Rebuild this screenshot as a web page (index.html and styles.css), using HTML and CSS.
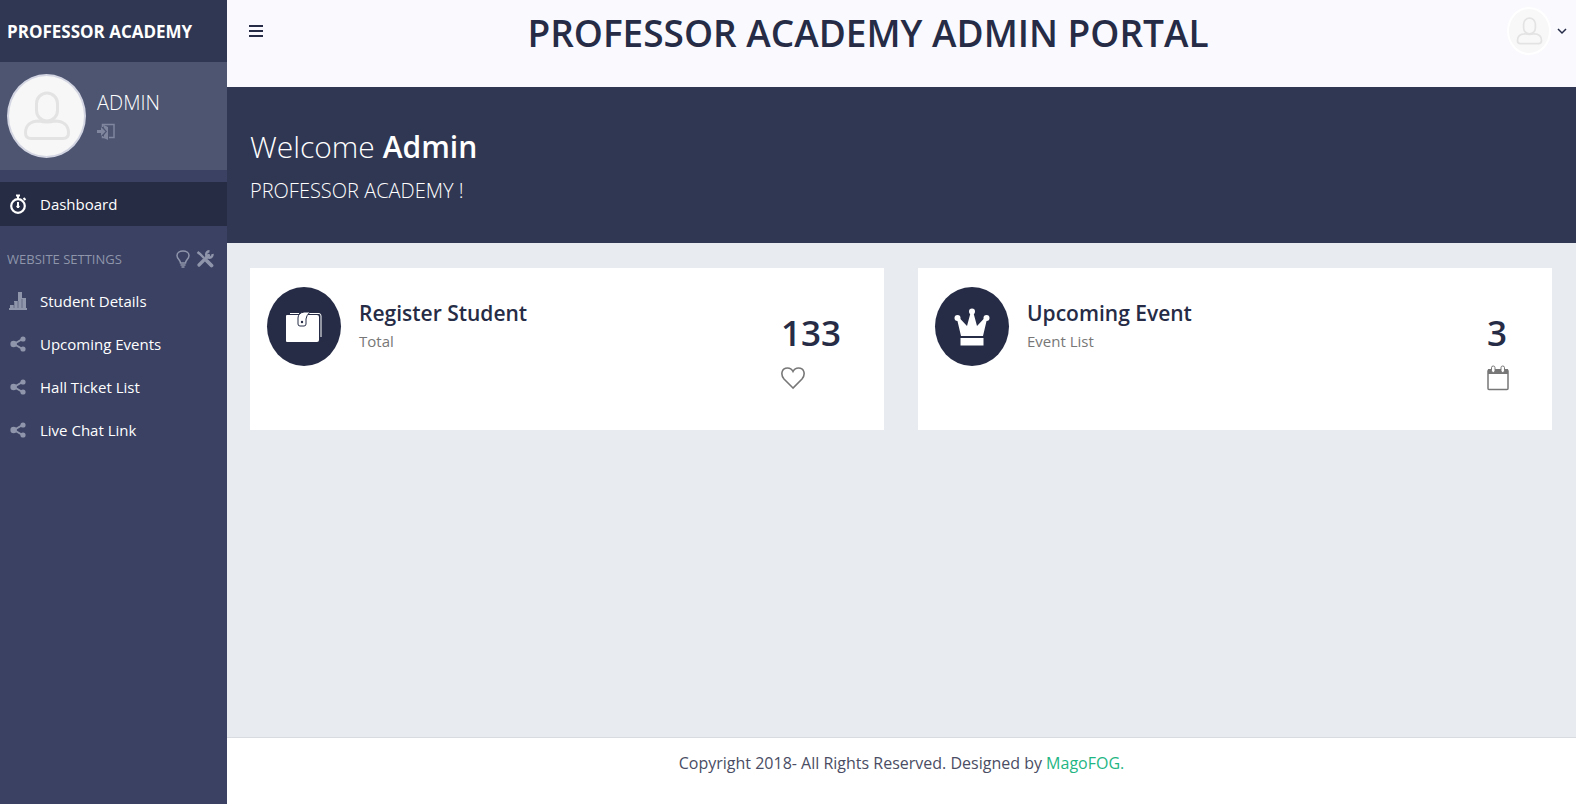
FILE: index.html
```
<!DOCTYPE html>
<html lang="en">
<head>
    <meta charset="UTF-8">
    <meta name="viewport" content="width=device-width, initial-scale=1.0">
    <title>Professor Academy Admin Portal</title>
    <link rel="stylesheet" href="styles.css">
</head>
<body>

<svg class="sprite" aria-hidden="true">
    <symbol id="user" viewBox="0 0 46 50">
        <rect x="12.500" y="2" width="21" height="28" rx="10.500"/>
        <path d="M15 30C7 30 1.500 34 1.500 42C1.500 45.500 3 47.500 7 47.500H39C43 47.500 44.500 45.500 44.500 42C44.500 34 39 30 31 30Q23 32 15 30Z"/>
    </symbol>
    <symbol id="share" viewBox="0 0 16 16">
        <path d="M12.500 3L4 8L12.500 13" fill="none" stroke="currentColor" stroke-width="2"/>
        <circle cx="3.600" cy="8" r="3.200"/>
        <circle cx="13" cy="3" r="2.600"/>
        <circle cx="13" cy="13" r="2.600"/>
    </symbol>
</svg>

<aside class="sidebar">
    <a class="brand" href="#">PROFESSOR ACADEMY</a>
    <div class="profile">
        <div class="avatar"><svg width="46" height="50"><use href="#user"/></svg></div>
        <div class="profile-info">
            <h3>ADMIN</h3>
            <a href="#" aria-label="Logout">
                <svg width="18" height="18" viewBox="0 0 18 18" fill="none" stroke="currentColor">
                    <path d="M0 8.500H5" stroke-width="3"/>
                    <path d="M4 4L8.500 8.500L4 13Z" fill="currentColor" stroke="none"/>
                    <path d="M5.500 4V1.500H17V14.500H12M5.500 13V14.500H10" stroke-width="1.500"/>
                    <path d="M6 1.500L11 4V17L7 15V12L10 8.500L7 5Z" fill="currentColor" stroke="none"/>
                </svg>
            </a>
        </div>
    </div>
    <nav>
        <a class="nav-link active" href="#">
            <svg width="18" height="20" viewBox="0 0 18 20" fill="none" stroke="currentColor">
                <circle cx="9" cy="12" r="6.800" stroke-width="2.200"/>
                <path d="M7 1.500H11M9 1V5M14.500 4L16.500 6" stroke-width="2"/>
                <path d="M9 8V14" stroke-width="2"/>
                <circle cx="9" cy="12.500" r="1.200" fill="currentColor"/>
            </svg>
            Dashboard
        </a>
        <div class="nav-title">
            <span>WEBSITE SETTINGS</span>
            <svg width="14" height="18" viewBox="0 0 14 18" fill="none" stroke="currentColor" stroke-width="1.500">
                <path d="M4.500 13C4.500 10 1 9 1 5.500C1 2.500 4 1 7 1C10 1 13 2.500 13 5.500C13 9 9.500 10 9.500 13Z"/>
                <path d="M4.500 15H9.500M5.500 17H8.500"/>
            </svg>
            <svg width="18" height="18" viewBox="0 0 18 18" fill="none" stroke="currentColor">
                <path d="M3 15L12.500 5.500" stroke-width="3.200" stroke-linecap="round"/>
                <path d="M16.500 4A3.200 3.200 0 1 1 13.500 1.300" stroke-width="2.400"/>
                <path d="M1.500 2L4 4L8 8" stroke-width="2.400"/>
                <path d="M11 11L15.500 15.500" stroke-width="3.800" stroke-linecap="round"/>
            </svg>
        </div>
        <a class="nav-link" href="#">
            <svg width="18" height="20" viewBox="0 0 18 20" fill="currentColor">
                <path d="M0 17H1V14H5V10H9V1H13V7H17V17H18V19H0Z"/>
                <path d="M5 11V17M9 10V17M13 8V17" stroke="#3a4162" stroke-width="0.500"/>
            </svg>
            Student Details
        </a>
        <a class="nav-link" href="#"><svg width="18" height="16" fill="currentColor"><use href="#share"/></svg>Upcoming Events</a>
        <a class="nav-link" href="#"><svg width="18" height="16" fill="currentColor"><use href="#share"/></svg>Hall Ticket List</a>
        <a class="nav-link" href="#"><svg width="18" height="16" fill="currentColor"><use href="#share"/></svg>Live Chat Link</a>
    </nav>
</aside>

<div class="main">
    <header class="header">
        <button class="menu-toggle" aria-label="Toggle menu">
            <svg width="14" height="14" viewBox="0 0 14 14"><path d="M0 2H14M0 7H14M0 12H14" stroke="currentColor" stroke-width="2"/></svg>
        </button>
        <h1>PROFESSOR ACADEMY ADMIN PORTAL</h1>
        <button class="user-menu" aria-label="User menu">
            <span class="avatar-small"><svg width="27" height="28"><use href="#user"/></svg></span>
            <svg width="10" height="7" viewBox="0 0 10 7" fill="none" stroke="currentColor" stroke-width="1.500"><path d="M1 1L5 5L9 1"/></svg>
        </button>
    </header>

    <section class="banner">
        <h2>Welcome <strong>Admin</strong></h2>
        <p>PROFESSOR ACADEMY !</p>
    </section>

    <main class="cards">
        <div class="card">
            <div class="card-icon">
                <svg width="36" height="32" viewBox="0 0 36 32">
                    <path d="M4 2.500H13M22 2.500H33Q35 2.500 35 5V26" fill="none" stroke="#fff"/>
                    <path d="M1 4H31Q33 4 33 6V29Q33 31 31 31H1Q0 31 0 30V5Q0 4 1 4Z" fill="#fff"/>
                    <path d="M24 1H18Q12 2 12 7V13Q12 15 14 15H18Q20 15 20 13V8Q20 5 24 1Z" fill="#fff" stroke="#262c46"/>
                    <circle cx="16" cy="11" r="1.200" fill="#262c46"/>
                </svg>
            </div>
            <div class="card-text">
                <h3>Register Student</h3>
                <p>Total</p>
            </div>
            <div class="card-stat">
                <strong>133</strong>
                <svg width="24" height="26" viewBox="0 0 24 26" fill="none" stroke="currentColor" stroke-width="1.600">
                    <path d="M12 23L3 14C-1 9 1 3 6.500 3C9.500 3 11 4.500 12 6.500C13 4.500 14.500 3 17.500 3C23 3 25 9 21 14Z"/>
                </svg>
            </div>
        </div>
        <div class="card">
            <div class="card-icon">
                <svg width="36" height="38" viewBox="0 0 36 38" fill="#fff">
                    <path d="M7 28L3 11L5 9.500L13 18L16.500 5H19.500L23 18L31 9.500L33 11L29 28Z"/>
                    <circle cx="3.500" cy="10" r="3"/>
                    <circle cx="18" cy="3.500" r="3"/>
                    <circle cx="32.500" cy="10" r="3"/>
                    <rect x="6.500" y="30" width="23" height="7.500"/>
                </svg>
            </div>
            <div class="card-text">
                <h3>Upcoming Event</h3>
                <p>Event List</p>
            </div>
            <div class="card-stat">
                <strong>3</strong>
                <svg width="22" height="26" viewBox="0 0 22 26" fill="none" stroke="currentColor">
                    <path d="M1 4H21V9H1Z" fill="currentColor" stroke="none"/>
                    <rect x="1" y="5" width="20" height="19.500" rx="1" stroke-width="1.500"/>
                    <rect x="4.500" y="1" width="3.500" height="6.500" rx="1.700" fill="#fff"/>
                    <rect x="14" y="1" width="3.500" height="6.500" rx="1.700" fill="#fff"/>
                </svg>
            </div>
        </div>
    </main>

    <footer class="footer">Copyright 2018- All Rights Reserved. Designed by <a href="#">MagoFOG.</a></footer>
</div>

</body>
</html>
```
FILE: styles.css
```
* {
    box-sizing: border-box;
}
body {
    margin: 0;
    display: flex;
    min-height: 100vh;
    font-family: "Open Sans", sans-serif;
    font-size: 15px;
    color: #262c46;
    background-color: #e8ebf0;
}
h1, h2, h3, p {
    margin: 0;
}
a {
    color: inherit;
    text-decoration: none;
}
button {
    border: none;
    background: none;
    padding: 0;
    color: inherit;
    cursor: pointer;
}
svg {
    display: block;
    flex: none;
}
.sprite {
    position: absolute;
    width: 0;
    height: 0;
}
.sidebar {
    flex: none;
    width: 227px;
    background-color: #3a4162;
    color: #fff;
}
.brand {
    display: flex;
    align-items: center;
    height: 62px;
    padding-left: 7px;
    background-color: #303753;
    font-size: 17px;
    font-weight: 700;
    white-space: nowrap;
}
.profile {
    display: flex;
    gap: 11px;
    height: 108px;
    padding: 12px 7px;
    background-color: #4d5571;
}
.avatar {
    display: flex;
    align-items: center;
    justify-content: center;
    width: 79px;
    height: 84px;
    border: 2px solid #d3d5e2;
    border-radius: 50%;
    background-color: #f7f7f7;
}
.avatar svg, .avatar-small svg {
    fill: none;
    stroke: #e3e3e3;
    stroke-width: 3;
}
.profile-info {
    padding-top: 16px;
    color: #7f869e;
}
.profile-info h3 {
    margin-bottom: 7px;
    font-size: 20px;
    font-weight: 300;
    line-height: 26px;
    color: #fff;
}
nav {
    padding-top: 12px;
}
.nav-link {
    display: flex;
    align-items: center;
    gap: 13px;
    height: 43px;
    padding: 0 9px;
}
.nav-link svg {
    color: #8f95ab;
}
.nav-link.active {
    height: 44px;
    background-color: #262c43;
}
.nav-link.active svg {
    color: #fff;
}
.nav-title {
    display: flex;
    align-items: center;
    gap: 6px;
    height: 53px;
    padding: 13px 13px 0 7px;
    font-size: 13px;
    color: #8f95ab;
}
.nav-title span {
    flex: 1;
    white-space: nowrap;
}
.main {
    flex: 1;
    display: flex;
    flex-direction: column;
    min-width: 0;
}
.header {
    display: flex;
    align-items: flex-start;
    height: 87px;
    background-color: #f9f9fe;
}
.menu-toggle {
    display: flex;
    align-items: center;
    width: 54px;
    height: 62px;
    padding-left: 22px;
}
.header h1 {
    flex: 1;
    padding-top: 5px;
    font-size: 37px;
    font-weight: 600;
    line-height: 56px;
    text-align: center;
}
.user-menu {
    display: flex;
    align-items: center;
    justify-content: flex-end;
    gap: 6px;
    width: 121px;
    height: 62px;
    padding-right: 9px;
}
.avatar-small {
    display: flex;
    align-items: center;
    justify-content: center;
    width: 44px;
    height: 48px;
    border: 2px solid #fff;
    border-radius: 50%;
    background-color: #f8f8f9;
}
.banner {
    height: 156px;
    padding: 37px 23px;
    background-color: #303753;
    color: #fff;
    font-weight: 300;
}
.banner h2 {
    margin-bottom: 8px;
    font-size: 30px;
    font-weight: 300;
    line-height: 46px;
}
.banner strong {
    font-weight: 600;
}
.banner p {
    font-size: 20px;
    line-height: 26px;
}
.cards {
    flex: 1;
    display: grid;
    grid-template-columns: 1fr 1fr;
    align-items: start;
    gap: 34px;
    padding: 25px 24px 25px 23px;
}
.card {
    display: flex;
    gap: 18px;
    min-height: 162px;
    padding: 19px 43px 19px 17px;
    background-color: #fff;
}
.card-icon {
    display: flex;
    align-items: center;
    justify-content: center;
    flex: none;
    width: 74px;
    height: 79px;
    border-radius: 50%;
    background-color: #262c46;
}
.card-text {
    flex: 1;
    padding-top: 10px;
    color: #777;
}
.card-text h3 {
    font-size: 21px;
    font-weight: 600;
    line-height: 32px;
    color: #262c46;
}
.card-text p {
    line-height: 24px;
}
.card-stat {
    padding-top: 23px;
    color: #777;
}
.card-stat strong {
    display: block;
    margin-bottom: 9px;
    font-size: 35px;
    font-weight: 600;
    line-height: 46px;
    color: #262c46;
}
.footer {
    height: 67px;
    padding-top: 12px;
    border-top: 1px solid #d8dbe0;
    background-color: #fff;
    color: #4a4d64;
    font-size: 16px;
    line-height: 26px;
    text-align: center;
}
.footer a {
    color: #1fb684;
}
```
